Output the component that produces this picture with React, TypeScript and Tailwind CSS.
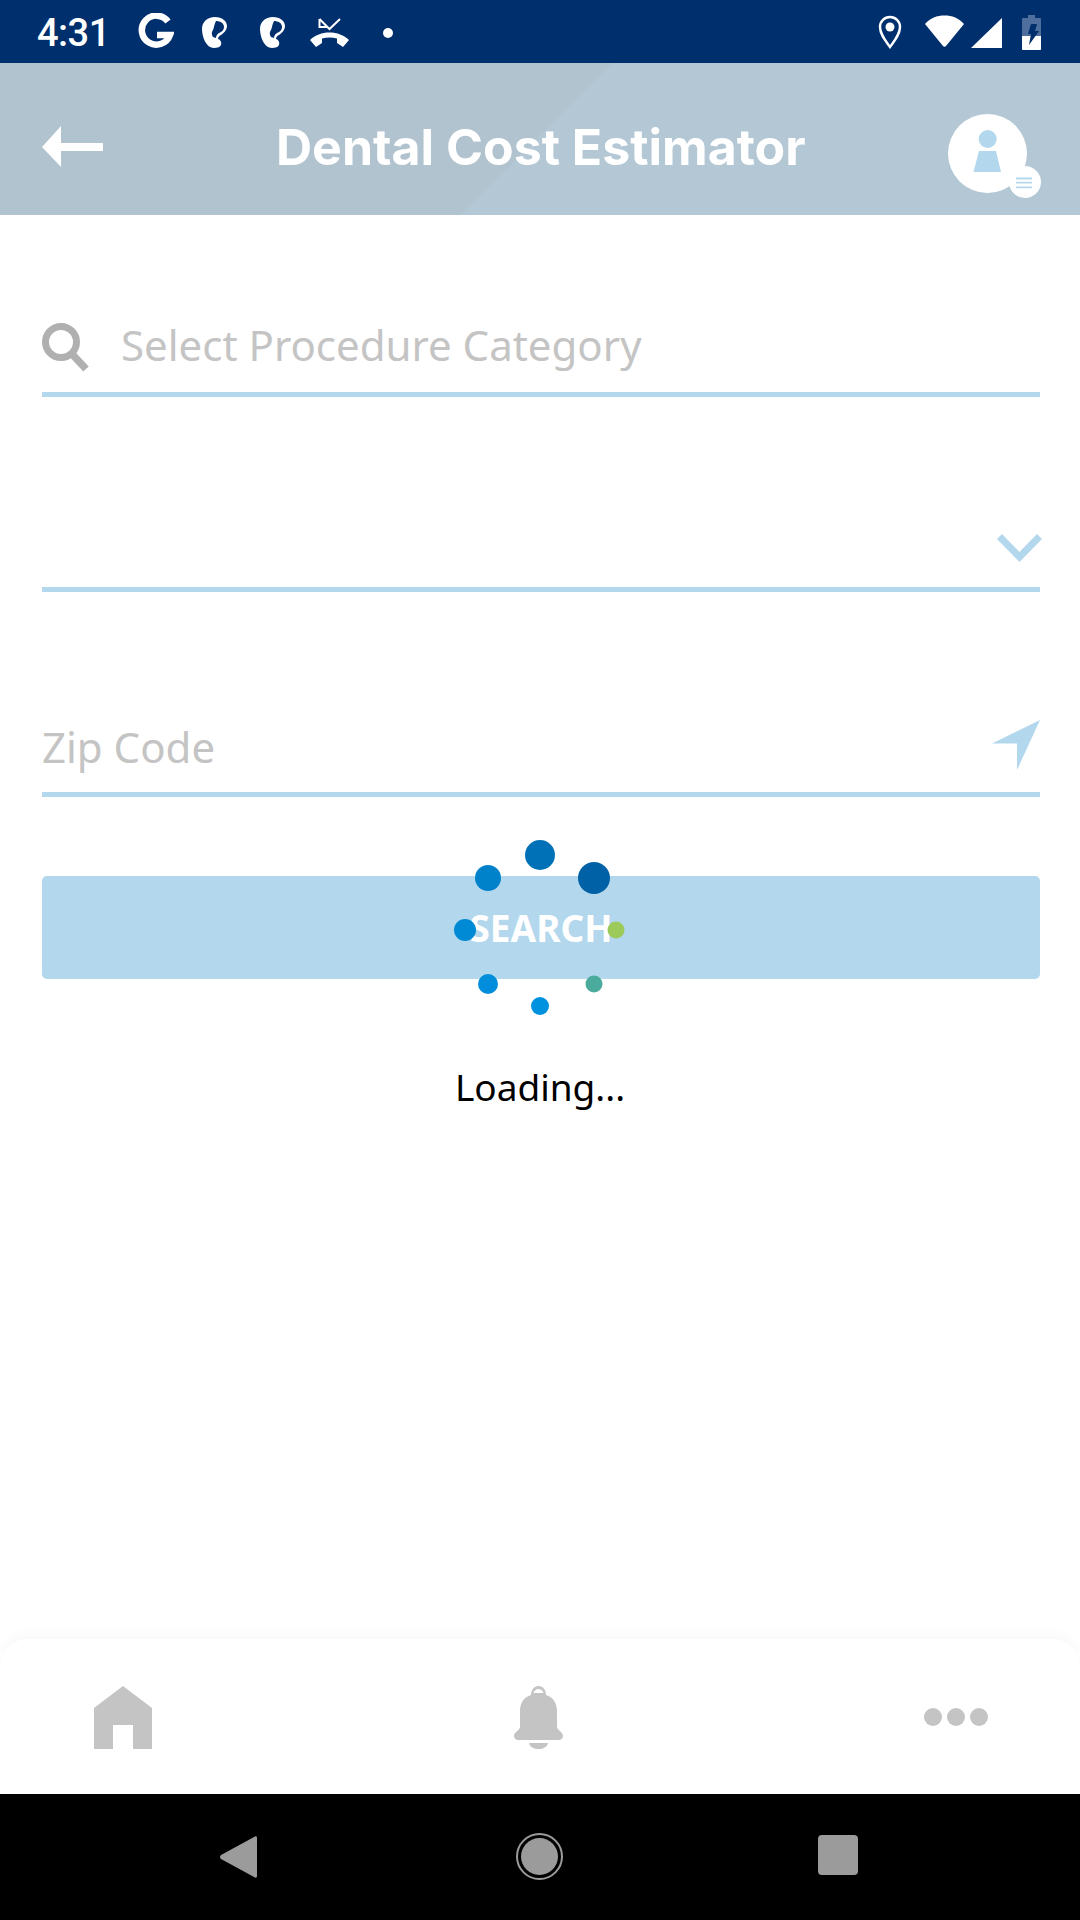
function EarIcon({ className }: { className: string }) {
  return (
    <svg className={className} width="26" height="31" viewBox="0 0 26 31" fill="white">
      <path fillRule="evenodd" d="M14 0C6 0 1 5 1 12c0 8 4 19 12 19 6 0 8-3 7-6-.5-2-2-3-3-3 0-2 1-3 3-4 3-2 6-5 6-9 0-5-5-9-12-9Zm1 4c4 0 8 2 8 6 0 3-2 5-5 6-2 1-3 3-3 5l-3-1c-1-2-2-4 0-7 1-2 1-5 3-9Z" />
    </svg>
  );
}

function StatusBar() {
  return (
    <div className="flex h-[63px] shrink-0 items-center bg-[#002f6d] pl-[37px] text-white">
      <span className="mt-[3px] font-['Roboto',sans-serif] text-[38px] font-medium leading-none tracking-[-0.5px]">4:31</span>
      <svg className="ml-[28px]" width="36" height="38" viewBox="0 0 36 38" fill="none">
        <path d="M30 8.500A14.500 14.500 0 1 0 32 22H19" stroke="white" strokeWidth="6.500" />
      </svg>
      <EarIcon className="ml-[27px] mt-[2px]" />
      <EarIcon className="ml-[32px] mt-[2px]" />
      <svg className="ml-[25px] mt-[2px]" width="39" height="30" viewBox="0 0 39 30" fill="none">
        <path d="M9.500 1v8h8M9.500 1 19.500 11 30 1" stroke="white" strokeWidth="2" />
        <path d="M0 22C5 17 12 14.500 19.500 14.500S34 17 39 22l-6 7-6-4v-4.500c-5-1.500-10-1.500-15 0V25l-6 4Z" fill="white" />
      </svg>
      <div className="ml-[34px] mt-[2px] h-[10px] w-[10px] rounded-full bg-white" />
      <svg className="ml-auto mt-[1px]" width="24" height="34" viewBox="0 0 24 34" fill="none">
        <path d="M12 32C7 25 2 19 2 12a10 10 0 0 1 20 0c0 7-5 13-10 20Z" stroke="white" strokeWidth="2.400" />
        <circle cx="12" cy="12" r="4.500" fill="white" />
      </svg>
      <svg className="ml-[22px]" width="41" height="33" viewBox="0 0 41 33" fill="white">
        <path d="M1 9C6 3 13 .5 20.500 .5S35 3 40 9L22 31c-.8 1-2.200 1-3 0Z" />
      </svg>
      <svg className="ml-[6px] mt-[2px]" width="31" height="32" viewBox="0 0 31 32" fill="white">
        <path d="M31 1v30H0Z" />
      </svg>
      <svg className="ml-[20px] mr-[39px] mt-[1px]" width="19" height="35" viewBox="0 0 19 35">
        <path d="M6 0h7v3h5a1 1 0 0 1 1 1v31H0V4a1 1 0 0 1 1-1h5Z" fill="#4e6f9e" />
        <path d="M0 21h19v13a1 1 0 0 1-1 1H1a1 1 0 0 1-1-1Z" fill="white" />
        <path d="M9 9h6l-2 7h4L7 30l2-11H6Z" fill="#002f6d" />
      </svg>
    </div>
  );
}

function Header() {
  return (
    <div className="flex h-[152px] shrink-0 items-center bg-[linear-gradient(135deg,#b2c3d0_433px,#b3c7d5_433px)] pl-[42px] pt-[15px]">
      <svg width="61" height="41" viewBox="0 0 61 41" fill="white">
        <path d="M0 21 19 0v17h42v8H19v16Z" />
      </svg>
      <h1 className="ml-[173px] font-['Inter',sans-serif] text-[50px] font-bold leading-none text-white">Dental Cost Estimator</h1>
      <svg className="ml-auto mr-[39px] mt-[18px]" width="93" height="84" viewBox="0 0 93 84">
        <circle cx="39.500" cy="39.500" r="39.500" fill="white" />
        <circle cx="39.700" cy="25" r="9" fill="#b3d7ec" />
        <path d="M31 37h17l5 21H25.500Z" fill="#b3d7ec" />
        <circle cx="77" cy="68" r="16" fill="white" />
        <path d="M68 64.500h16M68 68.700h16M68 73.300h16" stroke="#b3d7ec" strokeWidth="1.800" />
      </svg>
    </div>
  );
}

function Spinner() {
  const dots = [
    { x: 75, y: 15, r: 15, fill: "#0071b6" },
    { x: 129, y: 38, r: 16, fill: "#0061a6" },
    { x: 23, y: 38, r: 13, fill: "#0082cb" },
    { x: 0, y: 90, r: 11, fill: "#008ad6" },
    { x: 151, y: 90, r: 8.500, fill: "#9ccb5c" },
    { x: 23, y: 144, r: 10, fill: "#008ddb" },
    { x: 129, y: 144, r: 8.500, fill: "#4aab9c" },
    { x: 75, y: 166, r: 9, fill: "#0092de" },
  ];
  return (
    <svg className="overflow-visible" width="151" height="175" viewBox="0 0 151 175">
      {dots.map((d) => (
        <circle key={d.x + "-" + d.y} cx={d.x} cy={d.y} r={d.r} fill={d.fill} />
      ))}
    </svg>
  );
}

function BottomNav() {
  return (
    <div className="flex h-[155px] shrink-0 items-start rounded-t-[28px] bg-white pl-[94px] pt-[47px] shadow-[0_-6px_12px_rgba(0,0,0,0.025)]">
      <svg width="58" height="63" viewBox="0 0 58 63" fill="#c4c4c4">
        <path d="M29 0 58 22v41H39V39H19v24H0V22Z" />
      </svg>
      <svg className="ml-[362px]" width="49" height="63" viewBox="0 0 49 63" fill="#c4c4c4">
        <path fillRule="evenodd" d="M17 9c0-5 3-9 7.500-9S32 4 32 9c7 2 11 8 11 16v16c0 3 6 5 6 9 0 2-2 4-4 4H4c-2 0-4-2-4-4 0-4 6-6 6-9V25c0-8 4-14 11-16Zm2.500-2h10c-.500-2-2.500-4-5-4s-4.500 2-5 4Z" />
        <path d="M15 57h19c-1 4-5 6-9.500 6S16 61 15 57Z" />
      </svg>
      <div className="ml-[361px] mt-[22px] flex gap-[5px]">
        <div className="h-[18px] w-[18px] rounded-full bg-[#c4c4c4]" />
        <div className="h-[18px] w-[18px] rounded-full bg-[#c4c4c4]" />
        <div className="h-[18px] w-[18px] rounded-full bg-[#c4c4c4]" />
      </div>
    </div>
  );
}

function NavBar() {
  return (
    <div className="flex h-[126px] shrink-0 items-start bg-black pl-[220px] pt-[42px]">
      <svg width="37" height="42" viewBox="0 0 37 42" fill="#9b9b9b">
        <path d="M1 19 35 .5c1-.5 2 0 2 1.500v38c0 1.500-1 2-2 1.500L1 23c-1.300-1-1.300-3 0-4Z" />
      </svg>
      <svg className="ml-[259px] -mt-[3px]" width="47" height="47" viewBox="0 0 47 47" fill="none">
        <circle cx="23.500" cy="23.500" r="22.500" stroke="#9b9b9b" strokeWidth="2" />
        <circle cx="23.500" cy="23.500" r="18.500" fill="#9b9b9b" />
      </svg>
      <div className="ml-[255px] -mt-[1px] h-[40px] w-[40px] rounded-[4px] bg-[#9b9b9b]" />
    </div>
  );
}

export default function App() {
  return (
    <div className="relative flex h-[1920px] w-[1080px] flex-col overflow-hidden bg-white font-['Noto_Sans',sans-serif]">
      <StatusBar />
      <Header />
      <main className="flex-1 pl-[42px] pr-[40px]">
        <div className="flex h-[182px] items-end border-b-[5px] border-[#b3d7ec] pb-[20px]">
          <svg width="47" height="49" viewBox="0 0 47 49" fill="none">
            <circle cx="19" cy="19" r="15.500" stroke="#b0b0b0" strokeWidth="7" />
            <path d="M30 31 44 46" stroke="#b0b0b0" strokeWidth="7.500" />
          </svg>
          <span className="ml-[32px] text-[42px] leading-[54px] text-[#c4c4c4]">Select Procedure Category</span>
        </div>
        <div className="flex h-[195px] items-end justify-end border-b-[5px] border-[#b3d7ec] pb-[25px]">
          <svg className="-mr-[2px]" width="45" height="28" viewBox="0 0 45 28" fill="none">
            <path d="M2.500 2.500 22.500 23 42.500 2.500" stroke="#b3d7ec" strokeWidth="7" />
          </svg>
        </div>
        <div className="flex h-[205px] items-end justify-between border-b-[5px] border-[#b3d7ec] pb-[22px]">
          <span className="-mb-[4px] text-[42px] leading-[54px] text-[#c4c4c4]">Zip Code</span>
          <svg width="48" height="50" viewBox="0 0 48 50" fill="#b3d7ec">
            <path d="M48 0 0 23.500H25V50Z" />
          </svg>
        </div>
        <button className="mt-[79px] flex h-[103px] w-full items-center justify-center rounded-[5px] bg-[#b3d7ec] text-[37px] font-bold text-white">SEARCH</button>
      </main>
      <div className="absolute left-0 top-[840px] flex w-full flex-col items-center">
        <Spinner />
        <span className="mt-[47px] text-[37px] leading-[50px] text-black">Loading...</span>
      </div>
      <BottomNav />
      <NavBar />
    </div>
  );
}
